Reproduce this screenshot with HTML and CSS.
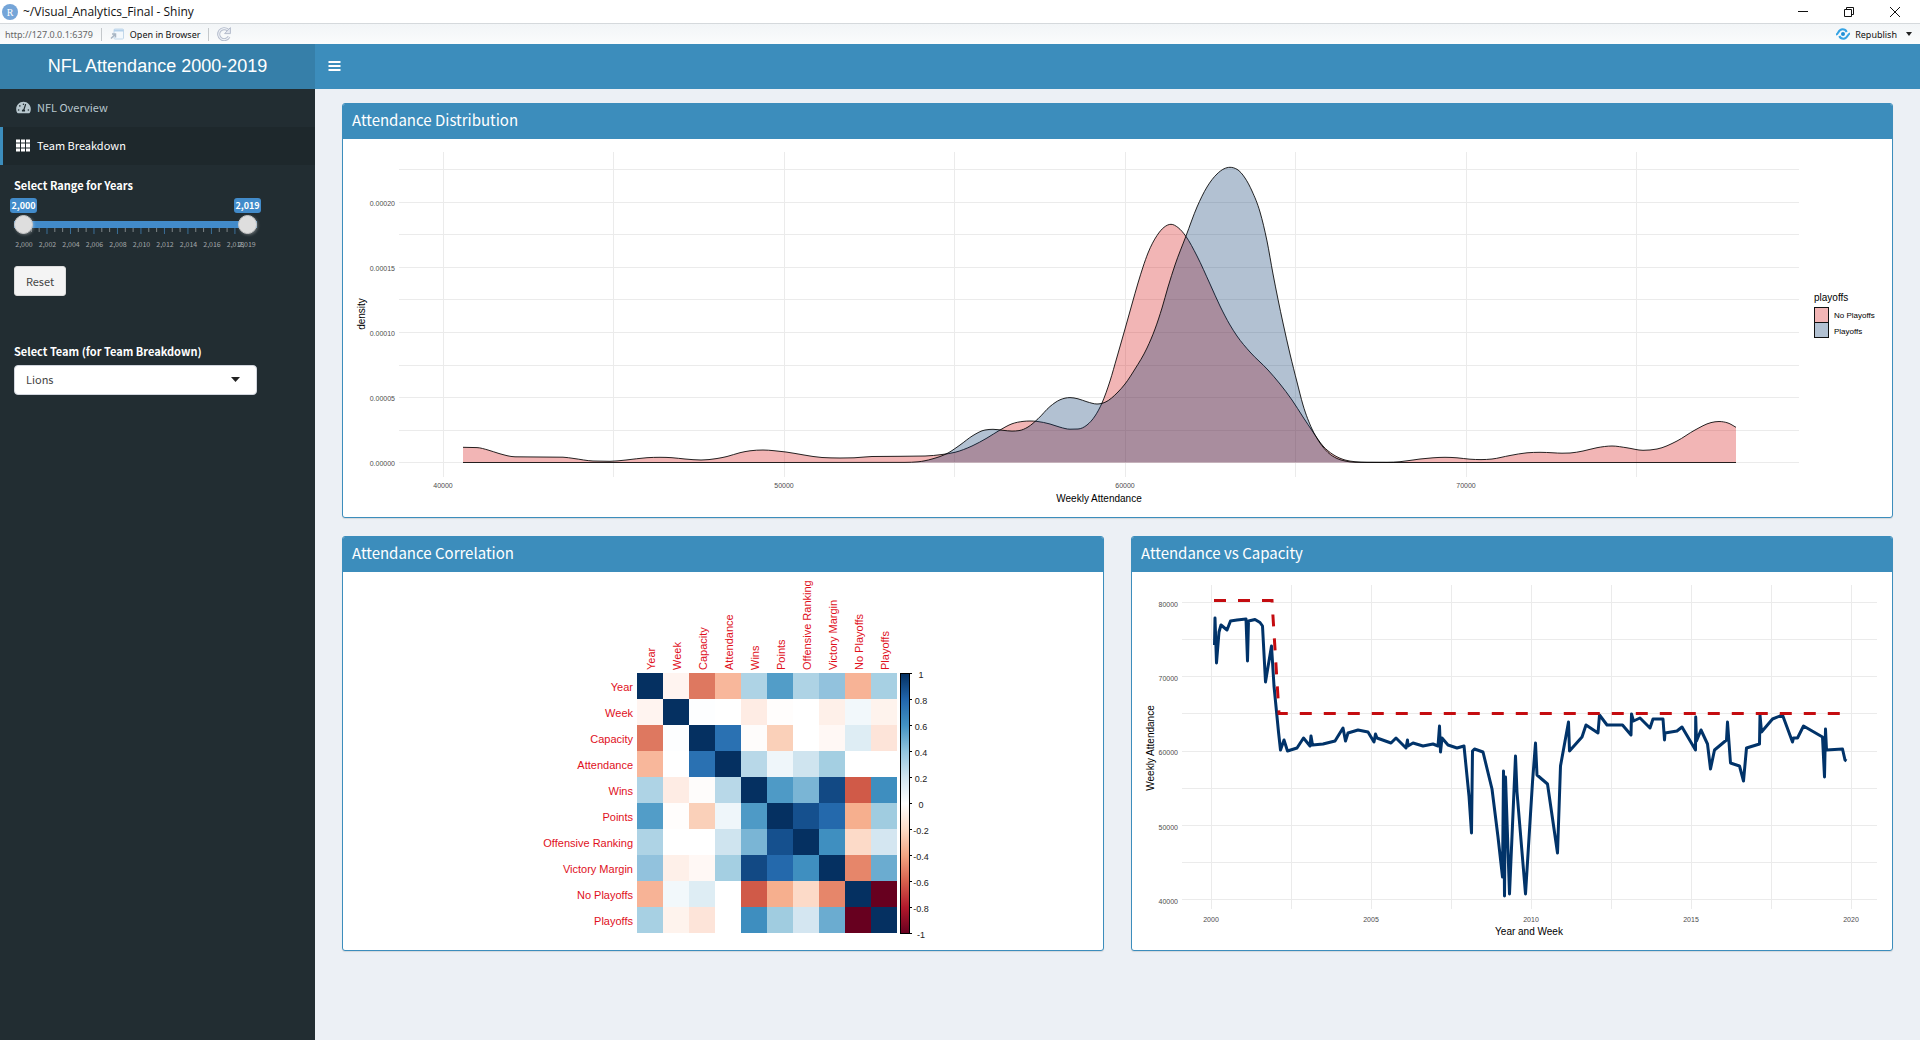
FILE: index.html
```html
<!DOCTYPE html>
<html lang="en">
<head>
<meta charset="utf-8">
<meta name="viewport" content="width=device-width, initial-scale=1">
<title>~/Visual_Analytics_Final - Shiny</title>
<link rel="stylesheet" href="styles.css">
</head>
<body>
<div class="titlebar">
  <svg class="app-icon" viewBox="0 0 16 16" aria-hidden="true"><circle cx="8" cy="8" r="8" fill="#75a5d8"/><text x="8" y="12" class="app-letter">R</text></svg>
  <span class="window-title">~/Visual_Analytics_Final - Shiny</span>
  <div class="window-controls">
    <button type="button" class="win-btn" aria-label="Minimize"><svg viewBox="0 0 12 12"><path d="M1 5.500h10"/></svg></button>
    <button type="button" class="win-btn" aria-label="Restore"><svg viewBox="0 0 12 12"><path d="M1.500 3.500h7v7h-7zM3.500 3.500v-2h7v7h-2"/></svg></button>
    <button type="button" class="win-btn" aria-label="Close"><svg viewBox="0 0 12 12"><path d="M1 1l10 10M11 1L1 11"/></svg></button>
  </div>
</div>
<div class="toolbar">
  <span class="url">http://127.0.0.1:6379</span>
  <span class="divider"></span>
  <button type="button" class="tool-btn">
    <svg class="tool-icon" viewBox="0 0 14 12" aria-hidden="true"><rect x="4" y="1" width="9.500" height="10" rx="1" fill="#f4f9fd" stroke="#c3d8ea"/><path d="M4 2.500h9.500" stroke="#b4d1ea" stroke-width="2"/><path d="M1 10.500l4-4M2 6h3.500v3.500" fill="none" stroke="#a9b6c4" stroke-width="1.500"/></svg>
    <span>Open in Browser</span>
  </button>
  <span class="divider"></span>
  <button type="button" class="tool-btn" aria-label="Reload">
    <svg class="reload-icon" viewBox="0 0 14 14" aria-hidden="true"><path d="M12 9.800A5.500 5.500 0 1 1 11 3.200" fill="none" stroke="#b4bccc" stroke-width="3"/><path d="M12 9.800A5.500 5.500 0 1 1 11 3.200" fill="none" stroke="#eef1f6" stroke-width="1.200"/><path d="M13.400 .6v6H7.600z" fill="#e4e8f0" stroke="#b4bccc"/></svg>
  </button>
  <button type="button" class="tool-btn republish">
    <svg class="republish-icon" viewBox="0 0 14 12" aria-hidden="true"><circle cx="7" cy="6" r="2" fill="#1f8fd6"/><path d="M0 6.500C2.500 6.500 2 1.300 6.500 1.300c2 0 3.500 1 4.200 2.700M14 5.500c-2.500 0-2 5.200-6.500 5.200-2 0-3.500-1-4.200-2.700" fill="none" stroke="#36a3e3" stroke-width="2"/></svg>
    <span>Republish</span>
    <svg class="caret-small" viewBox="0 0 6 4" aria-hidden="true"><path d="M0 0h6L3 4z" fill="#222"/></svg>
  </button>
</div>

<header class="header">
  <a class="logo" href="#">NFL Attendance 2000-2019</a>
  <nav class="navbar">
    <button type="button" class="nav-toggle" aria-label="Toggle navigation"><svg viewBox="0 0 12 10"><path d="M0 1h12M0 5h12M0 9h12" stroke="#fff" stroke-width="2"/></svg></button>
  </nav>
</header>

<div class="layout">
  <aside class="sidebar">
    <nav class="menu">
      <a class="menu-item" href="#overview">
        <svg class="menu-icon" viewBox="0 0 576 512" aria-hidden="true"><path fill="currentColor" d="M288 32C128.940 32 0 160.940 0 320c0 52.800 14.250 102.260 39.060 144.800 5.610 9.620 16.300 15.200 27.440 15.200h443c11.140 0 21.830-5.580 27.440-15.200C561.750 422.260 576 372.800 576 320c0-159.060-128.940-288-288-288zm0 64c14.710 0 26.580 10.130 30.320 23.650-1.110 2.260-2.640 4.230-3.450 6.670l-9.220 27.670c-5.130 3.490-10.970 6.010-17.640 6.010-17.670 0-32-14.330-32-32S270.330 96 288 96zM96 384c-17.670 0-32-14.330-32-32s14.330-32 32-32 32 14.330 32 32-14.330 32-32 32zm48-160c-17.670 0-32-14.330-32-32s14.330-32 32-32 32 14.330 32 32-14.330 32-32 32zm246.770-72.410l-61.330 184C343.130 347.330 352 364.540 352 384c0 11.720-3.380 22.550-8.880 32H232.880c-5.500-9.450-8.880-20.280-8.880-32 0-33.940 26.500-61.430 59.900-63.590l61.340-184.010c4.170-12.560 17.730-19.450 30.360-15.170 12.570 4.190 19.350 17.790 15.170 30.360zM480 384c-17.670 0-32-14.330-32-32s14.330-32 32-32 32 14.330 32 32-14.330 32-32 32z"/></svg>
        <span>NFL Overview</span>
      </a>
      <a class="menu-item active" href="#breakdown" aria-current="page">
        <svg class="menu-icon" viewBox="0 0 15 12" aria-hidden="true"><path fill="currentColor" d="M0 0h4v3H0zM5 0h4v3H5zM10 0h4v3h-4zM0 4h4v4H0zM5 4h4v4H5zM10 4h4v4h-4zM0 9h4v3H0zM5 9h4v3H5zM10 9h4v3h-4z"/></svg>
        <span>Team Breakdown</span>
      </a>
    </nav>
    <div class="controls">
      <fieldset class="slider">
        <legend class="control-label">Select Range for Years</legend>
        <div class="slider-values"><output for="year-from">2,000</output><output for="year-to">2,019</output></div>
        <div class="slider-track">
          <input id="year-from" class="range" type="range" min="2000" max="2019" value="2000" aria-label="From year">
          <input id="year-to" class="range" type="range" min="2000" max="2019" value="2019" aria-label="To year">
        </div>
        <svg class="slider-scale" id="year-scale" viewBox="14 228 243 22" aria-hidden="true"></svg>
      </fieldset>
      <button type="button" class="reset">Reset</button>
      <label class="control-label" for="team">Select Team (for Team Breakdown)</label>
      <div class="select-wrap">
        <select id="team" class="select"><option>Lions</option></select>
        <svg class="select-caret" viewBox="0 0 9 5" aria-hidden="true"><path d="M0 0h9L4.500 5z" fill="#222"/></svg>
      </div>
    </div>
  </aside>

  <main class="content">
    <section class="box wide">
      <h3 class="box-title">Attendance Distribution</h3>
      <svg class="chart" id="distribution" viewBox="343 139 1549 378" role="img" aria-label="Density of weekly attendance by playoffs"></svg>
    </section>
    <section class="box">
      <h3 class="box-title">Attendance Correlation</h3>
      <svg class="chart" id="correlation" viewBox="343 573 760 378" role="img" aria-label="Correlation matrix"></svg>
    </section>
    <section class="box">
      <h3 class="box-title">Attendance vs Capacity</h3>
      <svg class="chart" id="capacity" viewBox="1132 573 760 378" role="img" aria-label="Weekly attendance against capacity"></svg>
    </section>
  </main>
</div>
<script src="charts.js"></script>
</body>
</html>
```
FILE: styles.css
```css
* { box-sizing: border-box; }

body {
  margin: 0;
  min-height: 100vh;
  display: flex;
  flex-direction: column;
  background: #ecf0f5;
  font-family: "Noto Sans CJK JP", "Noto Sans", sans-serif;
  font-size: 11px;
  color: #333;
}

button { font: inherit; border: 0; background: none; padding: 0; color: inherit; }

/* window frame */
.titlebar {
  display: flex;
  align-items: center;
  gap: 5px;
  height: 24px;
  padding: 0 14px 0 2px;
  background: #fff;
  border-bottom: 1px solid #d5d9dc;
  font-family: "Open Sans", "Noto Sans", sans-serif;
  font-size: 12px;
  color: #111;
}
.app-icon { width: 16px; height: 16px; }
.app-letter { font: 10px "Liberation Serif", serif; fill: #fff; text-anchor: middle; }
.window-controls { display: flex; gap: 34px; margin-left: auto; margin-right: 5px; }
.win-btn { width: 12px; height: 12px; }
.win-btn svg { display: block; fill: none; stroke: #111; stroke-width: 1; }

.toolbar {
  display: flex;
  align-items: center;
  gap: 8px;
  height: 20px;
  padding: 0 8px 0 5px;
  background: linear-gradient(#f2f5f7, #fbfcfc);
  font-family: "Noto Sans", sans-serif;
  font-size: 9px;
  color: #111;
}
.url { color: #666; }
.divider { width: 1px; height: 13px; background: #c4c8cb; }
.tool-btn { display: flex; align-items: center; gap: 6px; }
.tool-icon { width: 14px; height: 12px; }
.reload-icon { width: 14px; height: 14px; }
.republish { margin-left: auto; gap: 5px; }
.republish-icon { width: 14px; height: 12px; }
.caret-small { width: 6px; height: 4px; margin-left: 4px; }

/* header */
.header { display: flex; height: 45px; }
.logo {
  width: 315px;
  flex: none;
  line-height: 44px;
  text-align: center;
  background: #367fa9;
  color: #fff;
  text-decoration: none;
  font-family: "Liberation Sans", sans-serif;
  font-size: 18px;
}
.navbar { flex: 1; display: flex; align-items: center; padding: 0 0 2px 13px; background: #3c8dbc; }
.nav-toggle svg { display: block; width: 13px; height: 10px; }

.layout { flex: 1; display: flex; }

/* sidebar */
.sidebar { width: 315px; flex: none; background: #222d32; color: #fff; }
.menu-item {
  display: flex;
  align-items: center;
  gap: 6px;
  height: 38px;
  padding: 0 0 2px 13px;
  border-left: 3px solid transparent;
  color: #b8c7ce;
  text-decoration: none;
}
.menu-item.active { background: #1e282c; border-color: #3c8dbc; color: #fff; }
.menu-icon { width: 15px; height: 13px; }

.controls { width: 271px; padding: 11px 14px; }
.control-label { display: block; padding: 0; font-weight: 700; line-height: 18px; }
.slider { margin: 0 0 16px; padding: 0; border: 0; min-width: 0; }
.slider-values { display: flex; justify-content: space-between; margin: 4px -4px 0; }
.slider-values output {
  width: 27px;
  height: 15px;
  border-radius: 3px;
  background: #428bca;
  font-size: 9px;
  font-weight: 700;
  line-height: 15px;
  text-align: center;
}
.slider-track { position: relative; height: 7px; margin-top: 8px; background: #428bca; }
.range {
  position: absolute;
  left: 0;
  top: -6px;
  width: 100%;
  height: 19px;
  margin: 0;
  appearance: none;
  background: none;
  pointer-events: none;
}
.range::-webkit-slider-thumb {
  appearance: none;
  width: 19px;
  height: 19px;
  border: 1px solid #c6c6c6;
  border-radius: 50%;
  background: #dedede;
  box-shadow: 1px 1px 3px rgba(255, 255, 255, .3);
  pointer-events: auto;
}
.slider-scale { display: block; width: 100%; }
.slider-scale text { font-size: 7px; fill: #a3a8aa; text-anchor: middle; }
.minor { stroke: #7d8486; }
.major { stroke: #3a6f98; }

.reset {
  display: block;
  width: 52px;
  height: 30px;
  margin-bottom: 46px;
  padding-bottom: 1px;
  border: 1px solid #ddd;
  border-radius: 3px;
  background: #f4f4f4;
  color: #444;
}
.select-wrap { position: relative; margin-top: 5px; }
.select {
  display: block;
  width: 100%;
  height: 30px;
  padding: 0 11px 2px;
  appearance: none;
  border: 1px solid #d2d6de;
  border-radius: 4px;
  background: #fff;
  color: #444;
  font: inherit;
}
.select-caret { position: absolute; right: 17px; top: 12px; width: 9px; height: 5px; pointer-events: none; }

/* boxes */
.content {
  flex: 1;
  display: grid;
  grid-template-columns: 1fr 1fr;
  align-content: start;
  gap: 18px 27px;
  padding: 14px 27px;
}
.wide { grid-column: 1 / -1; }
.box {
  border: 1px solid #3c8dbc;
  border-radius: 3px;
  background: #fff;
  box-shadow: 0 1px 1px rgba(0, 0, 0, .1);
  overflow: hidden;
}
.box-title {
  margin: 0;
  padding: 0 9px 3px;
  background: #3c8dbc;
  color: #fff;
  font-size: 15px;
  font-weight: 400;
  line-height: 32px;
}
.chart { display: block; width: 100%; height: auto; font-family: "Liberation Sans", sans-serif; }

/* chart parts */
.grid { stroke: #ebebeb; stroke-width: 1; }
.tick { font-size: 7px; fill: #4d4d4d; }
.axis-title, .legend-title { font-size: 10px; fill: #000; }
.legend-label { font-size: 8px; fill: #000; }
.middle { text-anchor: middle; }
.end { text-anchor: end; }
.density-line { fill: none; stroke: #000; stroke-opacity: .85; stroke-width: 1; }
.no-playoffs { fill: #d50a0a; fill-opacity: .3; }
.playoffs { fill: #013369; fill-opacity: .3; }
.key { stroke: #111; stroke-width: 1; }
.variable { font-size: 11px; fill: #e0101c; }
.scale-label { font-size: 9px; fill: #222; }
.scale-frame { stroke: #000; }
.attendance { fill: none; stroke: #013369; stroke-width: 3; stroke-linejoin: round; }
.capacity { fill: none; stroke: #c40c10; stroke-width: 3; stroke-dasharray: 12 12; }
```
FILE: charts.js
```js
const NS = "http://www.w3.org/2000/svg";

function add(parent, tag, attrs, text) {
  const el = document.createElementNS(NS, tag);
  for (const key in attrs) el.setAttribute(key, attrs[key]);
  if (text !== undefined) el.textContent = text;
  parent.appendChild(el);
  return el;
}

function pairs(text) {
  return text.trim().split(/\s+/).map(p => p.split(",").map(Number));
}

// Monotone cubic curve through the points (Fritsch-Carlson tangents).
function curve(pts) {
  const n = pts.length;
  const slope = i => (pts[i + 1][1] - pts[i][1]) / (pts[i + 1][0] - pts[i][0]);
  const tangents = pts.map((p, i) => {
    if (i === 0) return slope(0);
    if (i === n - 1) return slope(n - 2);
    const a = slope(i - 1), b = slope(i);
    if (a * b <= 0) return 0;
    const h0 = p[0] - pts[i - 1][0], h1 = pts[i + 1][0] - p[0];
    const mean = (a * h1 + b * h0) / (h0 + h1);
    return Math.sign(a) * Math.min(Math.abs(mean), 2 * Math.abs(a), 2 * Math.abs(b));
  });
  let d = "M" + pts[0];
  for (let i = 0; i < n - 1; i++) {
    const [x0, y0] = pts[i], [x1, y1] = pts[i + 1], h = (x1 - x0) / 3;
    d += `C${x0 + h},${y0 + h * tangents[i]} ${x1 - h},${y1 - h * tangents[i + 1]} ${x1},${y1}`;
  }
  return d;
}

function gridLines(svg, xs, ys, box) {
  ys.forEach(y => add(svg, "line", { class: "grid", x1: box.left, x2: box.right, y1: y, y2: y }));
  xs.forEach(x => add(svg, "line", { class: "grid", x1: x, x2: x, y1: box.top, y2: box.bottom }));
}

function vertical(svg, x, y, cls, text) {
  return add(svg, "text", { class: cls, transform: `translate(${x} ${y}) rotate(-90)` }, text);
}

// Year slider scale
(function () {
  const svg = document.getElementById("year-scale");
  for (let i = 0; i <= 28; i++) {
    const x = 23.5 + i * 7.83, major = i % 3 === 0;
    add(svg, "line", { class: major ? "major" : "minor", x1: x, x2: x, y1: 228, y2: major ? 234 : 232 });
  }
  for (let i = 0; i < 10; i++) {
    add(svg, "text", { x: 24 + i * 23.5, y: 247 }, "2," + String(i * 2).padStart(3, "0"));
  }
  add(svg, "text", { x: 247, y: 247 }, "2,019");
})();

// Attendance distribution
(function () {
  const svg = document.getElementById("distribution");
  gridLines(svg,
    [443.5, 613.5, 784.5, 954.5, 1125.5, 1295.5, 1466.5, 1636.5],
    [169.5, 202.5, 234.5, 267.5, 299.5, 332.5, 365.5, 397.5, 430.5, 462.5],
    { left: 399, right: 1799, top: 152, bottom: 477 });
  const base = 462.5;
  const no = pairs(`463,447.3 477,447.6 488,450 499,453.5 515,456.8 540,457 563,457.2 574,458.5 593,461 610,461.3 626,460
    647,457.7 660,457.3 672,457.7 685,459 701,460 717,458.5 727,456.5 740,452.7 750,450.8 763,450 774,450.7 786,452 804,455 822,457.5
    840,458 854,457.8 872,456.5 900,456.3 925,456 942,454.5 955,452.3 972,446 987,438 1000,430 1012,423.8 1023,421.4 1030,421 1037,421.4
    1050,424 1060,427.2 1070,429.2 1078,429 1087,425 1095,416 1102,403 1110,381 1117,357 1125,329 1132,304 1138,283
    1143,267 1148,253 1157,235.500 1164,227.3 1171,224.3 1178,227.5 1186,236.5 1197,256 1210,284 1220,306 1230,325 1237,336
    1250,352 1268,370 1280,384 1292,400 1303,417 1313,432 1323,446 1333,454.5 1345,460 1355,461.7 1367,462.3
    1387,462.3 1400,461.7 1420,459 1433,457.8 1445,457.3 1457,457.8 1470,459.2 1481,459.6 1492,459 1510,455.5 1527,452.8 1540,452.3 1553,452.8
    1562,453.2 1570,453 1583,451 1597,447.7 1612,446 1627,447.8 1643,450.3 1657,449 1677,441 1695,430 1711,422.6 1719,421.500
    1728,423 1736,427.3`);
  const yes = pairs(`463,462.5 780,462.5 905,462.4 918,461.8 932,459 948,453 960,445 973,435.5 985,430 993,429.3 1003,430.3 1012,431.1
    1019,430.6 1028,427 1038,418.8 1050,406.5 1060,399.800 1070,397.6 1078,398.8 1087,401.8 1097,404 1105,402.3 1118,392 1125,384 1135,369
    1147,348 1155,329 1162,308 1168,287 1175,265 1186,236 1197,207 1207,187 1217,174 1224,168.8 1230,167.3 1237,169.3
    1245,178 1252,191 1260,212 1267,241 1273,274 1283,323 1290,354 1297,382 1303,405 1312,429 1320,443 1328,452.500
    1337,458.5 1345,461 1355,462.3 1400,462.5 1736,462.5`);
  [[no, "no-playoffs"], [yes, "playoffs"]].forEach(([pts, cls]) => {
    const d = curve(pts);
    add(svg, "path", { class: cls, d: `${d}V${base}H463Z` });
    add(svg, "path", { class: "density-line", d });
  });
  ["0.00020", "0.00015", "0.00010", "0.00005", "0.00000"].forEach((t, i) =>
    add(svg, "text", { class: "tick end", x: 395, y: 206 + i * 65 }, t));
  ["40000", "50000", "60000", "70000"].forEach((t, i) =>
    add(svg, "text", { class: "tick middle", x: 443 + i * 341, y: 488 }, t));
  add(svg, "text", { class: "axis-title middle", x: 1099, y: 502 }, "Weekly Attendance");
  vertical(svg, 365, 314, "axis-title middle", "density");
  add(svg, "text", { class: "legend-title", x: 1814, y: 301 }, "playoffs");
  add(svg, "rect", { class: "no-playoffs key", x: 1814.5, y: 307.5, width: 14, height: 15 });
  add(svg, "rect", { class: "playoffs key", x: 1814.5, y: 322.5, width: 14, height: 15 });
  add(svg, "text", { class: "legend-label", x: 1834, y: 318 }, "No Playoffs");
  add(svg, "text", { class: "legend-label", x: 1834, y: 334 }, "Playoffs");
})();

// Attendance correlation
(function () {
  const svg = document.getElementById("correlation");
  const names = ["Year", "Week", "Capacity", "Attendance", "Wins", "Points", "Offensive Ranking", "Victory Margin", "No Playoffs", "Playoffs"];
  // Upper triangle, one row per variable, without the diagonal.
  const upper = [
    "fff4f0 de7860 f8b79b aed3e5 529dc8 aed3e5 92c2dd f7b396 a7d0e3",
    "fdfeff ffffff feece4 fffdfc ffffff fef0e9 f2f8fb fef3ed",
    "2a71b2 fefcfb fad0b9 ffffff fff8f5 deedf4 fde4d9",
    "b8d8e8 eff6fa cfe4ef a4cfe2 ffffff ffffff",
    "4e9ac6 7ab5d5 124984 d05a48 3e8ebf",
    "15508e 2469ac f6af8e a0cce0",
    "3f8fc0 fcdac8 d4e6f1",
    "e6866a 6bacd0",
    "67001f"
  ].map(row => row.split(" "));
  const size = 26, left = 637, top = 674;
  names.forEach((name, r) => {
    names.forEach((_, c) => {
      const lo = Math.min(r, c), hi = Math.max(r, c);
      const fill = r === c ? "#053061" : "#" + upper[lo][hi - lo - 1];
      add(svg, "rect", { x: left + c * size, y: top + r * size, width: size, height: size, fill, "shape-rendering": "crispEdges" });
    });
    add(svg, "text", { class: "variable end", x: 633, y: top + r * size + 18 }, name);
  });
  const clip = add(add(svg, "defs", {}), "clipPath", { id: "label-area" });
  add(clip, "rect", { x: 630, y: 582, width: 280, height: 92 });
  const labels = add(svg, "g", { "clip-path": "url(#label-area)" });
  names.forEach((name, c) => vertical(labels, left + c * size + 18, 671, "variable", name));

  const gradient = add(svg.querySelector("defs"), "linearGradient", { id: "rdbu", x1: 0, y1: 0, x2: 0, y2: 1 });
  ["053061", "2166ac", "4393c3", "92c5de", "d1e5f0", "ffffff", "fddbc7", "f4a582", "d6604d", "b2182b", "67001f"].forEach((c, i) =>
    add(gradient, "stop", { offset: i / 10, "stop-color": "#" + c }));
  add(svg, "rect", { class: "scale-frame", x: 900.5, y: 674.5, width: 9, height: 260, fill: "url(#rdbu)" });
  ["1", "0.8", "0.6", "0.4", "0.2", "0", "-0.2", "-0.4", "-0.6", "-0.8", "-1"].forEach((t, i) => {
    add(svg, "line", { class: "scale-frame", x1: 909, x2: 912, y1: 674.5 + i * 26, y2: 674.5 + i * 26 });
    add(svg, "text", { class: "scale-label middle", x: 921, y: 679 + i * 26 }, t);
  });
})();

// Attendance vs capacity
(function () {
  const svg = document.getElementById("capacity");
  gridLines(svg,
    [1211.5, 1291.5, 1371.5, 1451.5, 1531.5, 1611.5, 1691.5, 1771.5, 1851.5],
    [603.5, 640.5, 677.5, 714.5, 752.5, 789.5, 826.5, 863.5, 900.5],
    { left: 1182, right: 1877, top: 586, bottom: 910 });
  const line = (cls, text) => add(svg, "polyline", { class: cls, points: text.trim().replace(/\s+/g, " ") });
  line("attendance", `1214.5,646 1215,619 1216.5,664 1219,633 1221,626 1227,631 1230.5,622 1237,621 1246,620 1247.5,662
    1248.5,622 1255,620.5 1260,623.5 1262.5,627 1265.5,683 1271.5,647 1274,687 1278.5,733 1280.5,751 1284,741
    1287.5,752 1297,749 1303.5,739 1310,747 1311,737 1312.5,746 1323,745 1335,742 1343,729 1345.5,742 1348,734
    1358,731 1368,733 1374,743 1375.5,735 1377,739 1391,744 1396,739 1406,749 1407.5,741 1408,747 1413,744 1423,747
    1433,745 1438,747 1439.5,727 1440.5,753 1442,739 1448,746 1457,749 1464,747 1469,797 1471.5,834 1472.5,752
    1474.5,750 1483,753 1492,790 1498,838 1502.5,878 1503.5,772 1504.5,897 1505.5,778 1509.5,895 1515.5,757 1517,793
    1525.5,895 1532.5,783 1535.5,744 1537,776 1547.5,785 1557.5,854 1560.5,767 1568.5,723 1569.5,752 1582,738
    1586,726 1598,734 1599.5,716 1607,726 1622.5,726 1631,736 1631.5,715 1633.5,722 1640,719 1650,729 1653,720
    1663,720 1664.5,741 1665,734 1677,732 1682,728 1695.5,751 1695.7,718 1696.5,742 1701,731 1707.5,745 1710.5,770
    1714.5,751 1726.5,741 1727.5,723 1730.5,764 1739.5,767 1743.5,782 1746.5,749 1759.5,745 1760,716 1761.5,733
    1772.5,720 1782.5,716 1792.5,743 1793.5,739 1797.5,739 1803.5,727 1822.5,738 1824.5,778 1825.5,730 1826.5,751
    1842.5,750 1845,761 1846.5,762`);
  line("capacity", "1214,601.5 1272,601.5 1279,714.5 1841,714.5");
  ["80000", "70000", "60000", "50000", "40000"].forEach((t, i) =>
    add(svg, "text", { class: "tick end", x: 1178, y: Math.round(608 + i * 74.2) }, t));
  ["2000", "2005", "2010", "2015", "2020"].forEach((t, i) =>
    add(svg, "text", { class: "tick middle", x: 1211 + i * 160, y: 923 }, t));
  add(svg, "text", { class: "axis-title middle", x: 1529, y: 936 }, "Year and Week");
  vertical(svg, 1154, 749, "axis-title middle", "Weekly Attendance");
})();
```
